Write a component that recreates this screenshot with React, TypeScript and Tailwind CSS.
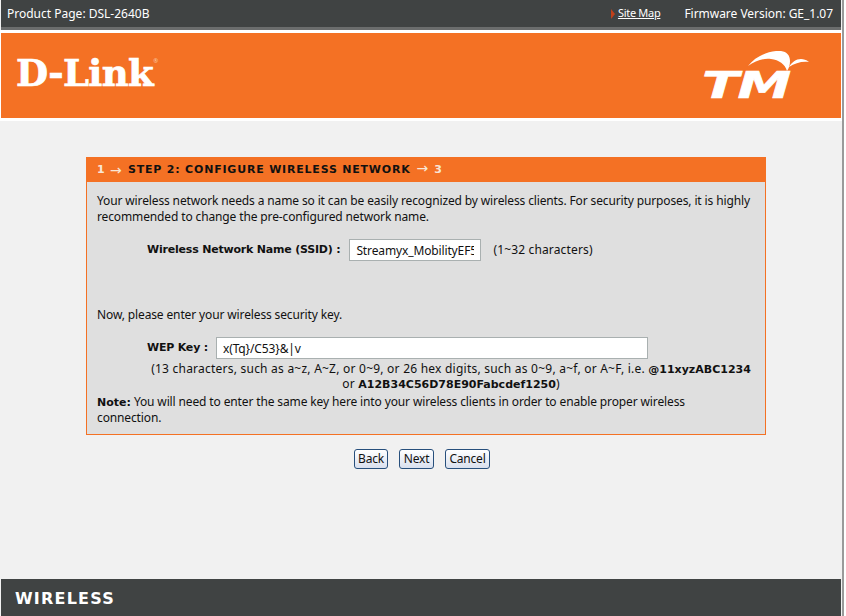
import React from "react";

const font = { fontFamily: '"Noto Sans", sans-serif' };
const boldFont = { fontFamily: '"DejaVu Sans", sans-serif' };

function Strong({ children, tight }: { children: React.ReactNode; tight?: boolean }) {
  return (
    <b className={tight ? "font-bold text-[11px] tracking-[-0.2px]" : "font-bold text-[11px] tracking-normal"} style={boldFont}>
      {children}
    </b>
  );
}

function NavButton({ label, width }: { label: string; width: string }) {
  return (
    <button className={`${width} h-[20px] rounded-[3px] border border-[#274f7c] bg-gradient-to-b from-[#ffffff] to-[#d9e0ee] leading-none tracking-[-0.2px] text-[#111]`}>
      {label}
    </button>
  );
}

function Arrow() {
  return <span className="w-[13px] text-[14px] leading-none font-normal text-[#f8e6d6] tracking-normal">→</span>;
}

export default function App() {
  return (
    <div className="w-[846px] h-[616px] bg-white flex overflow-hidden text-[12px] text-[#111]" style={font}>
      <div className="w-[842px] bg-[#f1f1f1] flex flex-col shrink-0">
        <div className="ml-px mr-px h-[30px] bg-[#404343] border-b-[3px] border-[#6b6d6d] flex items-center justify-between pl-[6px] pr-[8px] text-white shrink-0">
          <span>Product Page: DSL-2640B</span>
          <div className="flex items-center">
            <span className="w-0 h-0 border-y-[5px] border-y-transparent border-l-[4px] border-l-[#c0401a] mr-[3px]" />
            <span className="underline text-[11px] tracking-[-0.3px]">Site Map</span>
            <span className="ml-[24px] tracking-[-0.03px]">Firmware Version: GE_1.07</span>
          </div>
        </div>
        <div className="bg-white pt-[3px] pb-[3px] pl-px pr-px shrink-0">
          <div className="h-[85px] bg-[#f47124] flex items-center justify-between">
            <div className="ml-[15px] mb-[5px] flex items-start text-white">
              <span className="text-[37px] font-bold leading-none tracking-[-0.6px] [-webkit-text-stroke:0.7px_#fff]" style={{ fontFamily: '"DejaVu Serif", serif' }}>D-Link</span>
              <span className="text-[6px] leading-none mt-[3px] text-[#f9c9a8]">®</span>
            </div>
            <div className="relative mr-[31px] w-[106px] h-[50px] text-white">
              <svg className="absolute left-0 top-0" width="106" height="50" viewBox="0 0 106 50" fill="#fff">
                <path d="M44 15 C51 6 62 1 72 0 C81 -1 86 3 86 10 C86 14 85 17 83 20 C81 13 75 9 67 8 C59 7 51 10 44 15Z" />
                <path d="M85 16 C89 9 97 5 105 11 C98 10 91 12 85 16Z" />
              </svg>
              <span className="absolute left-[-2px] top-[15px] text-[38px] font-bold italic leading-none origin-left scale-x-[1.42] tracking-[-1px] [-webkit-text-stroke:0.6px_#fff]" style={{ fontFamily: '"DejaVu Sans", sans-serif' }}>TM</span>
            </div>
          </div>
        </div>
        <div className="flex-1 pt-[36px]">
          <div className="ml-[86px] w-[680px] bg-[#dfdfdf] border border-[#f47124] h-[278px]">
            <div className="h-[24px] bg-[#f47124] flex items-center pl-[10px] text-[11px] font-bold tracking-[0.8px] whitespace-pre" style={boldFont}>
              <span className="text-[#f8e6d6] w-[13px]">1</span>
              <Arrow />
              <span className="ml-[5px]">STEP 2: CONFIGURE WIRELESS NETWORK</span>
              <span className="ml-[6px]"><Arrow /></span>
              <span className="text-[#f8e6d6] ml-[6px]">3</span>
            </div>
            <div className="pl-[10px] pr-[8px] pt-[11px] tracking-[-0.13px]">
              <p className="leading-[16px]">Your wireless network needs a name so it can be easily recognized by wireless clients. For security purposes, it is highly recommended to change the pre-configured network name.</p>
              <div className="flex items-center mt-[14px] pl-[50px] h-[22px]">
                <Strong tight>Wireless Network Name (SSID) :</Strong>
                <input readOnly value="Streamyx_MobilityEF57" className="ml-[9px] w-[132px] h-[22px] bg-white border border-[#a9b0b0] px-[6px] outline-none text-[12px]" />
                <span className="ml-[12px] tracking-[0.15px]">(1~32 characters)</span>
              </div>
              <p className="mt-[46px] leading-[16px]">Now, please enter your wireless security key.</p>
              <div className="flex items-center mt-[14px] pl-[50px] h-[22px]">
                <Strong tight>WEP Key :</Strong>
                <input readOnly value="x(Tq}/C53}&|v" className="ml-[8px] w-[432px] h-[22px] bg-white border border-[#a9b0b0] px-[6px] outline-none text-[12px]" />
              </div>
              <div className="mt-[3px] pl-[48px] leading-[14px] text-center whitespace-nowrap tracking-[0.23px]">
                (13 characters, such as a~z, A~Z, or 0~9, or 26 hex digits, such as 0~9, a~f, or A~F, i.e. <Strong>@11xyzABC1234</Strong>
                <br />
                or <Strong>A12B34C56D78E90Fabcdef1250</Strong>)
              </div>
              <p className="mt-[2px] leading-[15px]"><Strong>Note:</Strong> You will need to enter the same key here into your wireless clients in order to enable proper wireless<br />connection.</p>
            </div>
          </div>
          <div className="ml-[354px] mt-[14px] flex">
            <NavButton label="Back" width="w-[34px]" />
            <div className="w-[11px]" />
            <NavButton label="Next" width="w-[35px]" />
            <div className="w-[11px]" />
            <NavButton label="Cancel" width="w-[45px]" />
          </div>
        </div>
        <div className="ml-px mr-px h-[37px] bg-[#404343] flex items-center pl-[14px] pt-[3px] text-white font-bold text-[16px] tracking-[1.2px] shrink-0" style={boldFont}>
          WIRELESS
        </div>
      </div>
      <div className="w-[2px] bg-[#9a9a9a] shrink-0" />
    </div>
  );
}
